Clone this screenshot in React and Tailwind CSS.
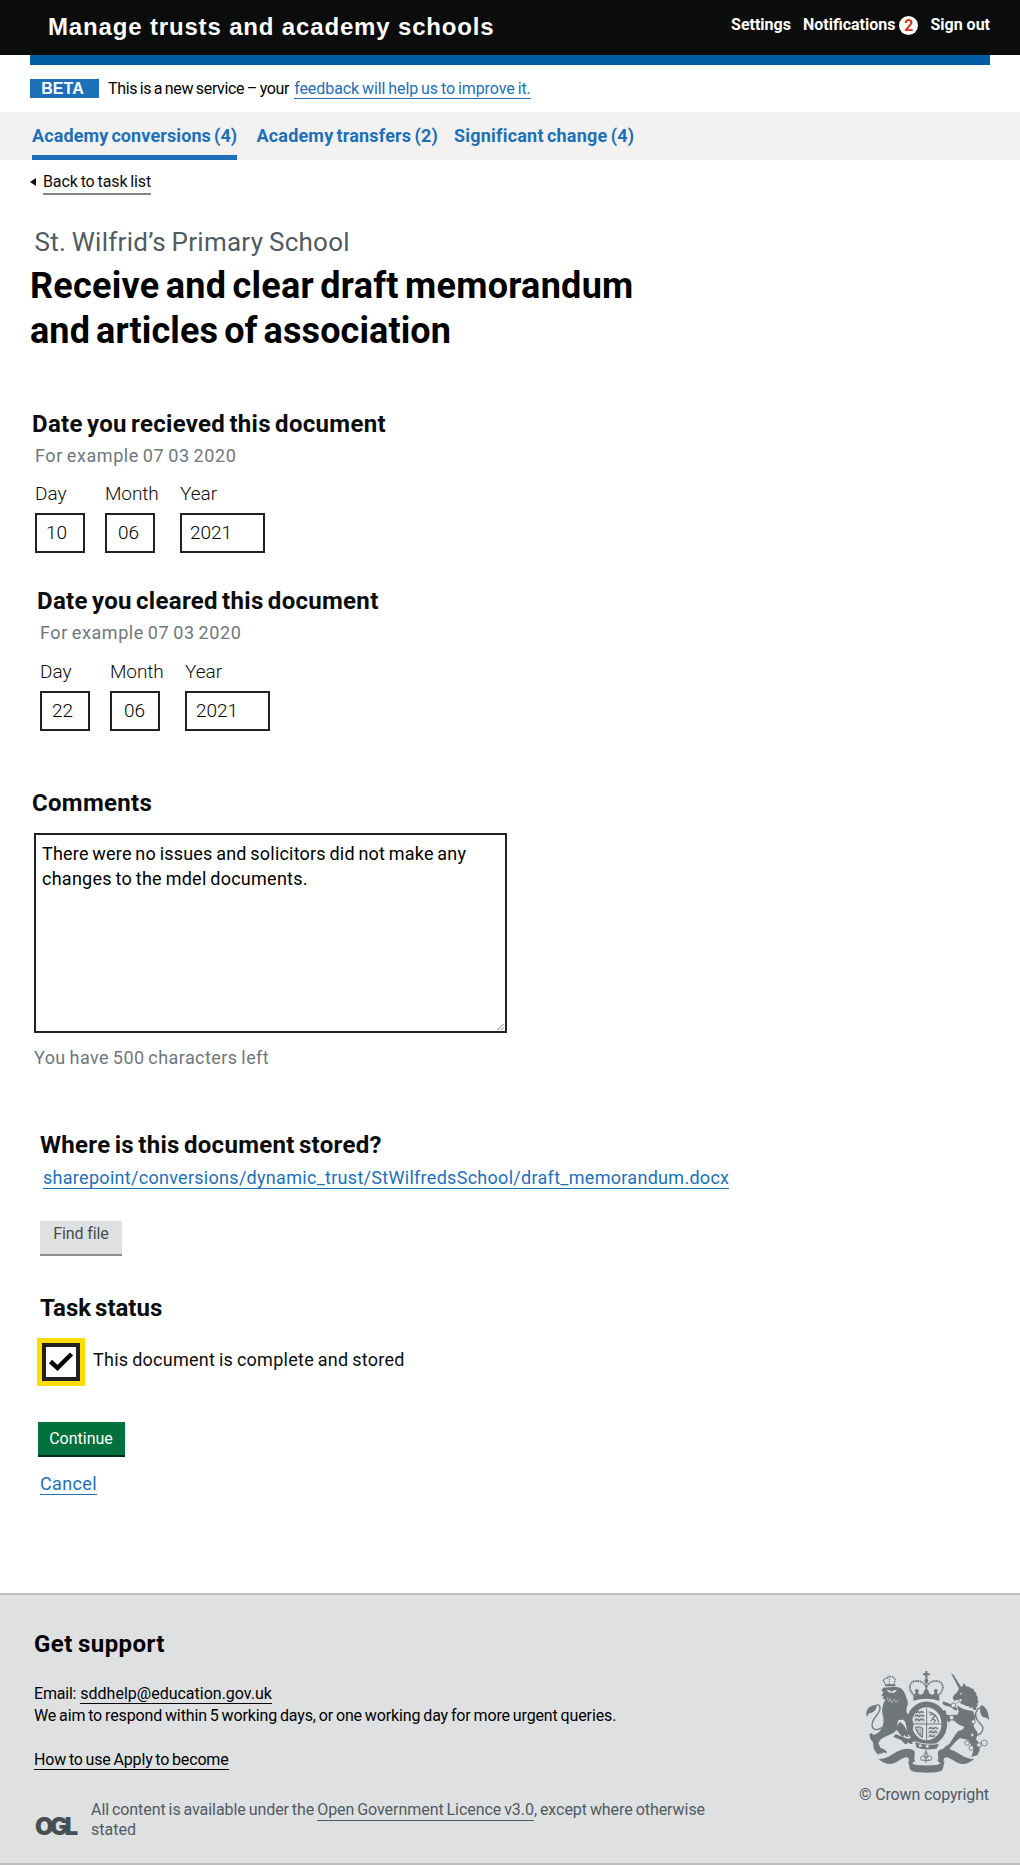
import React from 'react'

function DateBox({ label, value, box, labelClass = '' }) {
  return (
    <div className={box}>
      <div className={`h-[31px] text-[19px] leading-6 font-light ${labelClass}`}>{label}</div>
      <div className="flex h-10 items-center border-2 border-[#212123] bg-white text-[19px] leading-6 font-light text-black">
        {value}
      </div>
    </div>
  )
}

function DateGroup({ title, day, month, year, className, rowClass }) {
  return (
    <section className={className}>
      <h2 className="-ml-[3px] text-[24px] leading-[30px] font-bold tracking-[0.3px] [word-spacing:-2px]">{title}</h2>
      <p className="mt-[5px] text-[18px] leading-6 tracking-[0.56px] text-[#6f777b] [word-spacing:-1px]">For example 07 03 2020</p>
      <div className={`flex ${rowClass}`}>
        <DateBox label="Day" value={day} box="w-[50px]" />
        <DateBox label="Month" value={month} box="ml-5 w-[50px]" labelClass="tracking-[-0.1px]" />
        <DateBox label="Year" value={year} box="ml-[25px] w-[85px]" />
      </div>
    </section>
  )
}

function Crest() {
  return (
    <svg className="block" width="135" height="112" viewBox="0 0 405 336" fill="#6f777b" stroke="none">
      {/* central crown */}
      <g>
        <path d="M196 18h6v7h7v6h-7v10h-6V31h-7v-6h7z" />
        <circle cx="199" cy="47" r="6" />
        <path d="M164 92C140 72 148 46 172 48c14 1 22 8 27 18c5-10 13-17 27-18c24-2 32 24 8 44" fill="none" stroke="#6f777b" strokeWidth="5.5" strokeDasharray="5 2" />
        <path d="M199 52v40" fill="none" stroke="#6f777b" strokeWidth="5" strokeDasharray="5 2" />
        <path d="M163 92l4-10-3-6 7-5 6 6-3 8 8 6 8-6 3-9 6-6 6 6 3 9 8 6 8-6-3-8 6-6 7 5-3 6 4 10z" />
        <path d="M160 94c24-8 54-8 78 0v13c-24-8-54-8-78 0z" />
      </g>
      {/* garter and quartered shield */}
      <ellipse cx="200" cy="176" rx="53" ry="58" fill="none" stroke="#6f777b" strokeWidth="17" />
      <path d="M200 130v94M155 177h90" fill="none" stroke="#6f777b" strokeWidth="3" />
      <g fill="none" stroke="#6f777b" strokeWidth="4.5">
        <path d="M168 143l6-3 5 3 6-3 7 3M164 154l7-3 6 3 7-3 9 3M164 166l7-3 6 3 7-3 9 3" />
        <path d="M206 191l7-3 6 3 7-3 8 3M206 203l7-3 6 3 7-3 6 3M206 215l6-3 6 3 7-3" />
        <path d="M165 148l25 0M163 160l29 0M164 171l28 0M206 196h28M206 208h25" strokeWidth="2" strokeDasharray="3 3" />
        <path d="M206 141c14 2 26 14 30 31M209 150l9-4 7 8-8 5 9 8-5 6M211 168l9-6" strokeWidth="3.5" />
        <path d="M166 188c8-4 16-3 22 2l-1 26c-9-4-16-14-21-28z" strokeWidth="3.5" />
        <path d="M172 191v11M177 190v19M182 190v23" strokeWidth="2" />
      </g>
      {/* buckle */}
      <path d="M163 229c24 9 50 11 76 6l-8 17c-20 4-42 4-62-3z" stroke="#dee0e2" strokeWidth="3" />
      <path d="M178 238l8 1-2 7-8-1zM198 240l8 1-1 7-8-1z" fill="#dee0e2" />
      {/* fleur below the shield */}
      <path d="M198 254v40M198 260c-9 9-6 16 0 20c6-4 9-11 0-20M196 280c-4-10-15-8-14 1c1 6 7 6 9 3M201 280c4-10 15-8 14 1c-1 6-7 6-9 3M190 286h17" fill="none" stroke="#6f777b" strokeWidth="3" />
      {/* motto scroll */}
      <g>
        <path d="M54 281c12 3 27-2 39-10c20-14 42-24 61-18c15 5 10 16 9 26c0 4 1 6 3 9c-6 3-12 8-14 15c-3-4-5-8-5-14c1-8-2-12-9-12c-13 1-30 20-48 20c-13 0-25-7-36-16z" />
        <path d="M344 281c-12 3-27-2-39-10c-20-14-42-24-61-18c-15 5-10 16-9 26c0 4-1 6-3 9c6 3 12 8 14 15c3-4 5-8 5-14c-1-8 2-12 9-12c13 1 30 20 48 20c13 0 25-7 36-16z" />
        <path d="M144 289c8 3 14 10 27 11c19 2 37 2 56 0c13-1 19-8 27-11l-6 24c-5 8-22 10-49 10s-44-1-49-10z" />
      </g>
      {/* lion */}
      <g>
        <path d="M77 60l-7-14 5-6 7 0 2-6 8 0 7 2 7 8-5 16z" fill="none" stroke="#6f777b" strokeWidth="4" strokeDasharray="4 2" />
        <path d="M88 36v22" stroke="#6f777b" strokeWidth="3" strokeDasharray="4 2" />
        <path d="M75 58h31v6H76z" />
        <path d="M71 68l31-3c12 0 20 3 24 8c8 8 11 18 14 28c4 6 5 14 2 21c-3 9-4 15-1 23l10 12c9 10 12 22 8 32l-4 10-9-8-8-9c0-9-3-14-9-18l-14 1c-4 13-1 28-12 37c-12 9-30 12-42 22l-6 10 6 14 10 4 10 8-2 5-10-3-4 6-5-4-5 5-5-4-4-6-5-8-2-19-8-10-3-14 6-4 7 6 8-4c8-3 12-9 17-18c7-14 5-29 1-43c-3-16 5-34 10-43l-9 1 3-10-7 1 6-12-6-8z" />
        <path d="M120 170c9 6 17 17 21 28l12 7-3 6-7-3 2 8-6-1-6-5-3 6-6-3-9-12-9-10z" />
        <path d="M107 207c14 7 25 11 36 14l12-3 11 6-2 6-8 0 2 7-7 0-7-5-3 5-7-1-11-11-23-9z" />
        <path d="M80 74l12 3 3 4 7-6 9 1-8 7-8 1-10-3z" fill="#dee0e2" />
        <path d="M66 188c-24 14-34 1-28-18c5-16 24-26 22-43c-1-10-11-9-18-2" fill="none" stroke="#6f777b" strokeWidth="4" />
        <path d="M20 155c-3-17 3-31 22-34l8 2c-1 13-11 21-22 21z" />
        <path d="M82 96l3 14 6-9 4 13 8-12 5 11 7-11" fill="none" stroke="#dee0e2" strokeWidth="1.5" />
      </g>
      {/* unicorn */}
      <g>
        <path d="M273 25l8 5 25 40-7 5z" />
        <path d="M296 72l12-9 3-9 8 10 10 2 4 4 8 2 2 7 6 5 0 7 5 6-2 6 4 7-4 6 1 7-4 4-1 7-4 1c-14-7-30-9-43-18l5-15-14 3-9 2-5-7c2-9 7-13 14-18z" />
        <path d="M291 121c12 10 30 16 47 17c8 13 10 27 4 39c-5 12 11 18 11 30l-5 16 13 16-3 19-6 13-18 4 6-18-4-12-11-20-25-6-14 12-15 17-9 14-4-2 0-7-7 2-1-4 5-6 13-8 17-27 10-12c13-3 17-6 17-14c-11-1-22-8-29-17l-11-2-5 8-8-8-6-9 1-9-7-9 9-3 4 14 10 2 10-2 12 1 4-10z" />
        <path d="M288 137l-18-12-14-3-9-6 3-7 14 5 17 8 12 9z" />
        <path d="M291 112c14 11 30 17 48 19" fill="none" stroke="#dee0e2" strokeWidth="8" />
        <path d="M290 116l8-9 7 10 8-5 5 11 8-5 4 11 9-3" fill="none" stroke="#6f777b" strokeWidth="2.5" />
        <path d="M340 213c28-2 36-24 21-37c-14-13-19-28-9-42c7-9 18-5 17 5" fill="none" stroke="#6f777b" strokeWidth="4" />
        <path d="M362 121c14 1 22 14 26 44l-9-7-10-2c-10-8-10-23-7-35z" />
        <circle cx="303" cy="86" r="2.5" fill="#dee0e2" />
        <g fill="#dee0e2" stroke="#6f777b" strokeWidth="2.5">
          <circle cx="280" cy="121" r="7" />
          <circle cx="275" cy="158" r="7" />
          <circle cx="340" cy="170" r="6" />
          <circle cx="337" cy="210" r="5" />
          <circle cx="321" cy="234" r="7" />
          <circle cx="334" cy="249" r="7" />
          <circle cx="357" cy="240" r="7" />
          <circle cx="373" cy="234" r="9" />
        </g>
      </g>
    </svg>
  )
}

export default function App() {
  return (
    <div className="flex h-[1865px] w-[1020px] flex-col bg-white font-['Roboto',sans-serif] text-[#0b0c0c]">
      <header className="flex h-[55px] shrink-0 items-start bg-[#0b0c0c] pr-[30px] pl-12 text-white">
        <div className="mt-[15px] text-[24px] leading-6 font-bold tracking-[0.84px] whitespace-nowrap [font-family:'Liberation_Sans',Arial,sans-serif]">
          Manage trusts and academy schools
        </div>
        <nav className="mt-[15px] ml-auto flex text-[16px] leading-5 font-bold">
          <a>Settings</a>
          <a className="ml-3">Notifications</a>
          <span className="mt-px ml-1 flex h-[19px] w-[19px] items-center justify-center rounded-full bg-white pt-px text-[16px] leading-none text-[#d4351c]">2</span>
          <a className="ml-3">Sign out</a>
        </nav>
      </header>
      <div className="mx-[30px] h-[10px] shrink-0 bg-[#005ea5]" />

      <div className="flex h-[47px] shrink-0 pt-[14px] pl-[30px] text-[16px] leading-5 [word-spacing:-1px]">
        <span className="flex h-[19px] w-[69px] items-center justify-center bg-[#1d70b8] pr-[4px] text-[16px] font-bold text-white [font-family:'Liberation_Sans',Arial,sans-serif]">BETA</span>
        <span className="ml-[9px] tracking-[-0.34px] text-black">This is a new service – your</span>
        <a className="ml-[5px] h-5 border-b border-[#1d70b8] tracking-[-0.07px] text-[#1d70b8]">feedback will help us to improve it.</a>
      </div>

      <nav className="flex h-12 shrink-0 bg-[#f3f2f1] pt-3 pl-8 text-[18px] leading-6 font-bold text-[#1d70b8] [word-spacing:-1.500px]">
        <a className="h-9 w-[205px] border-b-[5px] border-[#1d70b8] tracking-[0.1px] whitespace-nowrap">Academy conversions (4)</a>
        <a className="ml-[19.500px] tracking-[0.18px] whitespace-nowrap">Academy transfers (2)</a>
        <a className="ml-[16px] tracking-[0.22px] whitespace-nowrap">Significant change (4)</a>
      </nav>

      <main className="flex flex-col items-start">
        <a className="mt-3 flex h-[23px] items-start pl-[30px] text-[16px] leading-5 [word-spacing:-1px]">
          <svg className="mt-[6px]" width="6" height="8" viewBox="0 0 6 8"><path d="M6 0v8L0 4z" fill="#0b0c0c" /></svg>
          <span className="ml-[7px] h-[23px] border-b-2 border-[#858688] tracking-[-0.1px]">Back to task list</span>
        </a>

        <p className="mt-[31px] pl-[34.5px] text-[26px] leading-8 tracking-[0.26px] text-[#505a5f] [word-spacing:-1px]">St. Wilfrid’s Primary School</p>
        <h1 className="mt-[6px] pl-[30px] text-[36px] leading-[45px] font-bold text-black [word-spacing:-3px]">
          <span className="block tracking-[0.27px]">Receive and clear draft memorandum</span>
          <span className="block tracking-[0.1px]">and articles of association</span>
        </h1>

        <DateGroup className="mt-[55px] pl-[35px]" rowClass="mt-[14px]" title="Date you recieved this document"
          day={<span className="pl-[9px]">10</span>} month={<span className="pl-[11px]">06</span>} year={<span className="pl-[8px]">2021</span>} />
        <DateGroup className="mt-[33px] pl-[40px]" rowClass="mt-[15px]" title="Date you cleared this document"
          day={<span className="pl-[10px]">22</span>} month={<span className="pl-[12px]">06</span>} year={<span className="pl-[9px]">2021</span>} />

        <h2 className="mt-[57px] pl-8 text-[24px] leading-[30px] font-bold tracking-[0.3px]">Comments</h2>
        <div className="relative mt-[15px] ml-[34px] h-[200px] w-[473px] border-2 border-[#212123] pt-[6px] pl-[6px] text-[18px] leading-[25px] text-black [word-spacing:-1px]">
          <div className="tracking-[0.2px] whitespace-nowrap">There were no issues and solicitors did not make any</div>
          <div className="tracking-[0.26px]">changes to the mdel documents.</div>
          <svg className="absolute right-0 bottom-0" width="8" height="8" viewBox="0 0 8 8" stroke="#777" fill="none"><path d="M.5 7L6.5 1M4 7l2.5-2.5" /></svg>
        </div>
        <p className="mt-[13px] pl-[34px] text-[18px] leading-6 tracking-[0.42px] text-[#6f777b] [word-spacing:-1px]">You have 500 characters left</p>

        <h2 className="mt-[60px] pl-[40px] text-[24px] leading-[30px] font-bold tracking-[0.3px] [word-spacing:-2px]">Where is this document stored?</h2>
        <a className="mt-[6px] ml-[43px] h-[23px] border-b border-[#1d70b8] text-[18px] leading-6 tracking-[0.29px] whitespace-nowrap text-[#1d70b8]">sharepoint/conversions/dynamic_trust/StWilfredsSchool/draft_memorandum.docx</a>
        <button className="mt-8 ml-[40px] flex h-[35px] w-[82px] justify-center border-b-2 border-[#8f9092] bg-[#dee0e2] pt-[3px] text-[16px] leading-5 tracking-[-0.1px] text-[#484b4d]">Find file</button>

        <h2 className="mt-[37px] pl-[40px] text-[24px] leading-[30px] font-bold [word-spacing:-2px]">Task status</h2>
        <label className="mt-[15px] ml-[37px] flex h-12 items-start">
          <span className="flex h-12 w-12 items-center justify-center border-[5px] border-[#ffdd00] bg-white">
            <span className="flex h-[38px] w-[38px] items-center justify-center border-4 border-[#212123]">
              <svg width="30" height="30" viewBox="0 0 30 30"><path d="M4.500 14.500l7 6.500L25.500 7" fill="none" stroke="#000" strokeWidth="4.500" /></svg>
            </span>
          </span>
          <span className="mt-[10px] ml-2 text-[18px] leading-6 tracking-[0.27px] [word-spacing:-1px]">This document is complete and stored</span>
        </label>

        <button className="mt-9 ml-[38px] flex h-[35px] w-[87px] justify-center border-b-2 border-[#002d18] bg-[#00703c] pt-[7px] pr-[1px] text-[16px] leading-5 text-white">Continue</button>
        <a className="mt-[15px] ml-[40px] h-[23px] border-b border-[#1d70b8] text-[18px] leading-6 tracking-[0.35px] text-[#1d70b8]">Cancel</a>
      </main>

      <footer className="mt-auto flex h-[272px] shrink-0 justify-between border-y-2 border-[#bbbdbf] bg-[#dee0e2] text-[16px] leading-5 text-black">
        <div className="flex flex-col items-start pl-[34px] [word-spacing:-1px]">
          <h2 className="mt-[34px] text-[24px] leading-[30px] font-bold tracking-[0.42px]">Get support</h2>
          <p className="mt-[25px] flex">
            <span className="tracking-[-0.2px]">Email:</span>
            <a className="ml-1 h-5 border-b border-black">sddhelp@education.gov.uk</a>
          </p>
          <p className="mt-[2px] tracking-[-0.12px]">We aim to respond within 5 working days, or one working day for more urgent queries.</p>
          <a className="mt-6 h-5 border-b border-black tracking-[-0.16px]">How to use Apply to become</a>
          <div className="mt-[30px] flex text-[#505a5f]">
            <span className="mt-[15px] w-[57px] pl-px text-[24px] leading-[24px] font-black tracking-[-3.600px] text-[#484f52] [font-family:Inter,sans-serif]">OGL</span>
            <div>
              <p className="flex whitespace-nowrap">
                <span className="tracking-[-0.06px]">All content is available under the</span>
                <a className="ml-[3px] h-[21px] border-b border-[#505a5f] tracking-[-0.05px]">Open Government Licence v3.0</a>
                <span className="tracking-[-0.05px]">, except where otherwise</span>
              </p>
              <p className="-mt-px">stated</p>
            </div>
          </div>
        </div>
        <div className="mt-[70px] w-[160px]">
          <Crest />
          <p className="mt-[8px] -ml-px tracking-[-0.15px] text-[#505a5f]">© Crown copyright</p>
        </div>
      </footer>
    </div>
  )
}
